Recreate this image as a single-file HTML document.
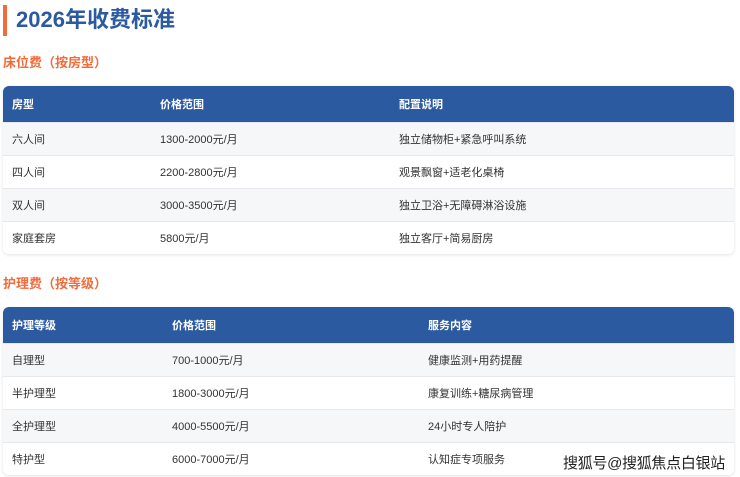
<!DOCTYPE html>
<html><head><meta charset="utf-8"><style>
*{margin:0;padding:0;box-sizing:border-box}
body{width:740px;height:477px;background:#fff;font-family:"Liberation Sans","Noto Sans CJK SC",sans-serif;position:relative;overflow:hidden}
.bar{position:absolute;left:3px;top:5px;width:4px;height:31px;background:#f26b3a}
h1{position:absolute;left:16px;top:6px;font-size:22px;line-height:28px;color:#2b5aa0;font-weight:bold}
h2{position:absolute;left:3px;font-size:13px;color:#f26b3a;font-weight:bold;line-height:18px}
table{position:absolute;left:3px;width:731px;border-collapse:separate;border-spacing:0;border-radius:6px;overflow:hidden;box-shadow:0 1px 3px rgba(0,0,0,.12);font-size:11px;color:#333}
th{background:#2c5aa0;color:#fff;text-align:left;font-weight:bold;height:36px;padding-left:9px}
td{height:33px;padding-left:9px;border-top:1px solid #e6e8eb}
tr:nth-child(odd) td{background:#f6f7f9}
tr:nth-child(even) td{background:#fff}
.wm{position:absolute;left:563px;top:452px;font-size:15px;letter-spacing:-0.3px;color:#222;text-shadow:0 0 2px #fff,0 0 2px #fff}
</style></head><body>
<div class="bar"></div>
<h1>2026年收费标准</h1>
<h2 style="top:54px">床位费（按房型）</h2>
<table style="top:86px">
<colgroup><col style="width:148px"><col style="width:239px"><col></colgroup>
<thead><tr><th>房型</th><th>价格范围</th><th>配置说明</th></tr></thead>
<tbody>
<tr><td>六人间</td><td>1300-2000元/月</td><td>独立储物柜+紧急呼叫系统</td></tr>
<tr><td>四人间</td><td>2200-2800元/月</td><td>观景飘窗+适老化桌椅</td></tr>
<tr><td>双人间</td><td>3000-3500元/月</td><td>独立卫浴+无障碍淋浴设施</td></tr>
<tr><td>家庭套房</td><td>5800元/月</td><td>独立客厅+简易厨房</td></tr>
</tbody></table>
<h2 style="top:275px">护理费（按等级）</h2>
<table style="top:307px">
<colgroup><col style="width:160px"><col style="width:256px"><col></colgroup>
<thead><tr><th>护理等级</th><th>价格范围</th><th>服务内容</th></tr></thead>
<tbody>
<tr><td>自理型</td><td>700-1000元/月</td><td>健康监测+用药提醒</td></tr>
<tr><td>半护理型</td><td>1800-3000元/月</td><td>康复训练+糖尿病管理</td></tr>
<tr><td>全护理型</td><td>4000-5500元/月</td><td>24小时专人陪护</td></tr>
<tr><td>特护型</td><td>6000-7000元/月</td><td>认知症专项服务</td></tr>
</tbody></table>
<div class="wm">搜狐号@搜狐焦点白银站</div>
</body></html>
